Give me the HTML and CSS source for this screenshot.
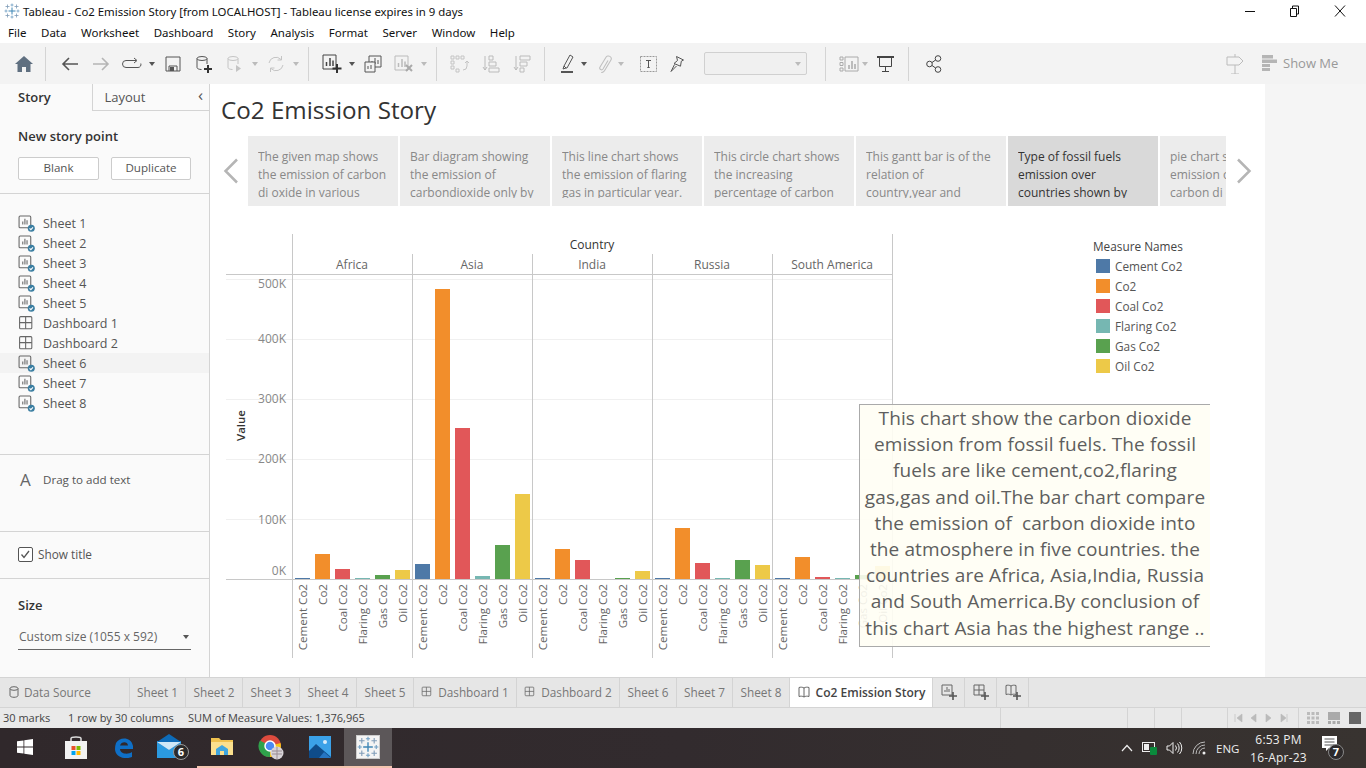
FILE: index.html
```html
<!DOCTYPE html>
<html lang="en">
<head>
  <meta charset="UTF-8">
  <title>Tableau - Co2 Emission Story</title>
  <link rel="stylesheet" href="styles.css">
</head>
<body>

<svg class="defs" width="0" height="0">
  <symbol id="i-sheet" viewBox="0 0 16 16">
    <rect x="1" y="1" width="11" height="11" rx="1" fill="none" stroke="#666"/>
    <path d="M4.500 9V6M6.500 9V3.500M8.500 9V5" stroke="#666" fill="none"/>
    <circle cx="12.500" cy="12.500" r="3.300" fill="#3b7ea1"/>
    <path d="M10.900 12.600l1.200 1.200 2-2.200" stroke="#fff" fill="none"/>
  </symbol>
  <symbol id="i-dash" viewBox="0 0 16 16">
    <rect x="1.500" y="1.500" width="11.500" height="11.500" rx="1" fill="none" stroke="#666"/>
    <path d="M7.200 1.500v11.500M1.500 7.200H13" stroke="#666" fill="none"/>
  </symbol>
  <symbol id="i-snow" viewBox="0 0 16 16">
    <path d="M8 4.500v7M4.500 8h7" stroke="#3f86b5" fill="none"/>
    <path d="M8 .5v3M6.500 2h3M8 12.500v3M6.500 14h3M.5 8h3M2 6.500v3M12.500 8h3M14 6.500v3" stroke="#6f9fc4" stroke-width=".8" fill="none"/>
    <path d="M3.500 1.500v4M1.500 3.500h4M12.500 1.500v4M10.500 3.500h4M3.500 10.500v4M1.500 12.500h4M12.500 10.500v4M10.500 12.500h4" stroke="#7f9cb8" stroke-width=".8" fill="none"/>
  </symbol>
  <symbol id="i-book" viewBox="0 0 14 14">
    <path d="M7 3C5.500 2 3.500 2 2 2.500v9c1.500-.5 3.500-.5 5 .5 1.500-1 3.500-1 5-.5v-9C10.500 2 8.500 2 7 3zM7 3v9" fill="none" stroke="#666"/>
  </symbol>
</svg>

<header class="titlebar">
  <svg class="title-logo" width="16" height="16"><use href="#i-snow"/></svg>
  <span class="title-text">Tableau - Co2 Emission Story [from LOCALHOST] - Tableau license expires in 9 days</span>
  <div class="win-btns">
    <svg width="12" height="12" viewBox="0 0 12 12"><path d="M1 6.500h10" stroke="#111"/></svg>
    <svg width="12" height="12" viewBox="0 0 12 12"><path d="M3.500 3V1h6v8H7.500M1.500 3.500h6v8h-6z" fill="none" stroke="#111"/></svg>
    <svg width="12" height="12" viewBox="0 0 12 12"><path d="M1 0.500l10 11M11 0.500l-10 11" stroke="#111"/></svg>
  </div>
</header>

<nav class="menubar">
  <span>File</span><span>Data</span><span>Worksheet</span><span>Dashboard</span><span>Story</span>
  <span>Analysis</span><span>Format</span><span>Server</span><span>Window</span><span>Help</span>
</nav>

<div class="toolbar">
  <div class="tb home">
    <svg width="18" height="16" viewBox="0 0 18 16"><path d="M9 0L0 8h2.500v8h4.500v-5h4v5h4.500V8H18z" fill="#5f6f80"/></svg>
  </div>
  <i class="sep"></i>
  <div class="tb tb-first">
    <svg width="18" height="14" viewBox="0 0 18 14"><path d="M17 7H2M8 1L2 7l6 6" fill="none" stroke="#555" stroke-width="1.600"/></svg>
  </div>
  <div class="tb">
    <svg width="18" height="14" viewBox="0 0 18 14"><path d="M1 7h15M10 1l6 6-6 6" fill="none" stroke="#b5b5b5" stroke-width="1.600"/></svg>
  </div>
  <div class="tb">
    <svg width="20" height="14" viewBox="0 0 20 14"><path d="M14 3.500H4a3 3 0 0 0 0 7h12a3 3 0 0 0 2.800-4M12 1l3 2.500-3 2.500" fill="none" stroke="#555"/></svg>
  </div>
  <i class="caret"></i>
  <div class="tb">
    <svg width="16" height="16" viewBox="0 0 16 16"><path d="M1 1h14v14H1zM4 15v-5h8v5" fill="none" stroke="#555"/><rect x="5" y="11" width="4" height="4" fill="#555"/></svg>
  </div>
  <div class="tb">
    <svg width="18" height="18" viewBox="0 0 18 18"><ellipse cx="7" cy="3.500" rx="5" ry="2" fill="none" stroke="#555"/><path d="M2 3.500v9c0 1.100 2 2 4.500 2M12 3.500V9" fill="none" stroke="#555"/><path d="M13 10v8M9 14h8" stroke="#333" stroke-width="2"/></svg>
  </div>
  <div class="tb">
    <svg width="18" height="18" viewBox="0 0 18 18"><ellipse cx="7" cy="3.500" rx="5" ry="2" fill="none" stroke="#c4c4c4"/><path d="M2 3.500v9c0 1.100 2 2 4.500 2M12 3.500V9" fill="none" stroke="#c4c4c4"/><path d="M10 10v7l5-3.500z" fill="#c4c4c4"/></svg>
  </div>
  <i class="caret off"></i>
  <div class="tb">
    <svg width="18" height="16" viewBox="0 0 18 16"><path d="M2 7a7 7 0 0 1 12-3.500M16 9a7 7 0 0 1-12 3.500M14.500 0v4h-4M3.500 16v-4h4" fill="none" stroke="#c4c4c4"/></svg>
  </div>
  <i class="caret off"></i>
  <i class="sep"></i>
  <div class="tb">
    <svg width="20" height="19" viewBox="0 0 20 19"><path d="M1 1h13v14H1z" fill="none" stroke="#444"/><path d="M4.500 12V8M8 12V4M11 12V6.500" stroke="#444" stroke-width="1.500"/><path d="M15 10v9M10.500 14.500h9" stroke="#333" stroke-width="2"/></svg>
  </div>
  <i class="caret"></i>
  <div class="tb">
    <svg width="18" height="18" viewBox="0 0 18 18"><path d="M5 1h12v11H5z" fill="#f3f3f3" stroke="#555"/><path d="M8 9V6M11 9V3M14 9V5" stroke="#555"/><path d="M1 7h10v10H1z" fill="#f3f3f3" stroke="#555"/><path d="M4 14v-3M7 14v-4" stroke="#555"/></svg>
  </div>
  <div class="tb">
    <svg width="20" height="18" viewBox="0 0 20 18"><path d="M1 1h13v14H1z" fill="none" stroke="#bbb"/><path d="M4.500 12V8M8 12V4M11 12V6.500" stroke="#bbb" stroke-width="1.500"/><path d="M12 10l6 6M18 10l-6 6" stroke="#aaa" stroke-width="2"/></svg>
  </div>
  <i class="caret off"></i>
  <i class="sep"></i>
  <div class="tb">
    <svg width="20" height="18" viewBox="0 0 20 18"><path d="M1 1h3v3H1zM6 1h3v3H6zM11 1h3v3h-3zM1 6h3v3H1zM1 11h3v3H1zM6 14h3v3H6z" fill="none" stroke="#c4c4c4"/><path d="M17 6v5a4 4 0 0 1-4 4M15 8l2-2 2 2" fill="none" stroke="#c4c4c4"/></svg>
  </div>
  <div class="tb">
    <svg width="18" height="18" viewBox="0 0 18 18"><path d="M3 1v14M1 12l2 3 2-3" fill="none" stroke="#bbb"/><path d="M7 1h4v4H7zM7 7h7v4H7zM7 13h10v4H7z" fill="none" stroke="#bbb"/></svg>
  </div>
  <div class="tb">
    <svg width="18" height="18" viewBox="0 0 18 18"><path d="M3 1v14M1 12l2 3 2-3" fill="none" stroke="#bbb"/><path d="M7 1h10v4H7zM7 7h7v4H7zM7 13h4v4H7z" fill="none" stroke="#bbb"/></svg>
  </div>
  <i class="sep"></i>
  <div class="tb">
    <svg width="14" height="20" viewBox="0 0 14 20"><path d="M5 14L3 12 9 1l3 2-6 11zM3 12l-1 3 3-1" fill="none" stroke="#555"/><rect x="0" y="17" width="12" height="2" fill="#555"/></svg>
  </div>
  <i class="caret tuck"></i>
  <div class="tb">
    <svg width="14" height="18" viewBox="0 0 14 18"><path d="M10 5.500L5 14a1.800 1.800 0 0 1-3.100-1.800L8 2.300a2.800 2.800 0 0 1 4.800 2.900L6.500 15.800a3.600 3.600 0 0 1-3.300 1.700" fill="none" stroke="#c0c0c0" stroke-width="1.100"/></svg>
  </div>
  <i class="caret tuck off"></i>
  <div class="tb tb-text">
    <svg width="17" height="16" viewBox="0 0 17 16"><rect x="0.500" y="0.500" width="16" height="15" fill="none" stroke="#999" stroke-dasharray="2 1"/><path d="M6 4.500h5M8.500 4.500v7M7.300 11.500h2.400" fill="none" stroke="#555"/></svg>
  </div>
  <div class="tb tb-pin">
    <svg width="14" height="16" viewBox="0 0 14 16"><path d="M6.500.5l7 3.500-2.200 1.200-.8 5L4 7.500l3.500-3zM4.500 8.500L1 15.500l5.500-5.500" fill="none" stroke="#555"/></svg>
  </div>
  <div class="combo"><i class="caret off"></i></div>
  <i class="sep"></i>
  <div class="tb">
    <svg width="20" height="16" viewBox="0 0 20 16"><path d="M1 1h3v3H1zM1 6.500h3v3H1zM1 12h3v3H1z" fill="none" stroke="#aaa"/><path d="M6 1h13v14H6z" fill="none" stroke="#aaa"/><path d="M10 13V9M13 13V5M16 13V8" stroke="#aaa" stroke-width="1.500"/></svg>
  </div>
  <i class="caret tuck off"></i>
  <div class="tb">
    <svg width="17" height="16" viewBox="0 0 17 16"><path d="M0 1h17" stroke="#444" stroke-width="2"/><path d="M2.500 1.500v9h12v-9M8.500 10.500v5M5 15.500h7" fill="none" stroke="#444"/></svg>
  </div>
  <i class="sep"></i>
  <div class="tb tb-share">
    <svg width="16" height="18" viewBox="0 0 16 18"><circle cx="3.500" cy="9" r="2.800" fill="none" stroke="#444"/><circle cx="12" cy="3.500" r="2.800" fill="none" stroke="#444"/><circle cx="12" cy="14.500" r="2.800" fill="none" stroke="#444"/><path d="M6 7.500l3.600-2.500M6 10.500l3.600 2.500" stroke="#444"/></svg>
  </div>
  <div class="tb tb-right">
    <svg width="18" height="20" viewBox="0 0 18 20"><path d="M9 0v3M9 11v9M5 20h8M1 3h12l4 4-4 4H1z" fill="none" stroke="#bbb"/></svg>
  </div>
  <div class="showme">
    <svg width="15" height="16" viewBox="0 0 15 16"><path d="M0 0h11v3.500H0zM0 4.500h15V8H0zM0 9h8v3H0zM0 13h8v3H0z" fill="#b5b5b5"/></svg>
    <span>Show Me</span>
  </div>
</div>

<div class="main">
  <aside class="sidebar">
    <div class="side-tabs">
      <div class="side-tab active">Story</div>
      <div class="side-tab">Layout <span class="collapse">&lsaquo;</span></div>
    </div>
    <section class="side-new">
      <h4>New story point</h4>
      <div class="side-btns">
        <button class="blank">Blank</button>
        <button class="dup">Duplicate</button>
      </div>
    </section>
    <ul class="sheet-list">
      <li><svg><use href="#i-sheet"/></svg>Sheet 1</li>
      <li><svg><use href="#i-sheet"/></svg>Sheet 2</li>
      <li><svg><use href="#i-sheet"/></svg>Sheet 3</li>
      <li><svg><use href="#i-sheet"/></svg>Sheet 4</li>
      <li><svg><use href="#i-sheet"/></svg>Sheet 5</li>
      <li><svg><use href="#i-dash"/></svg>Dashboard 1</li>
      <li><svg><use href="#i-dash"/></svg>Dashboard 2</li>
      <li class="hover"><svg><use href="#i-sheet"/></svg>Sheet 6</li>
      <li><svg><use href="#i-sheet"/></svg>Sheet 7</li>
      <li><svg><use href="#i-sheet"/></svg>Sheet 8</li>
    </ul>
    <section class="side-text"><span class="big-a">A</span>Drag to add text</section>
    <section class="side-title">
      <svg width="15" height="15" viewBox="0 0 15 15"><rect x="0.500" y="0.500" width="14" height="14" rx="1.500" fill="#fff" stroke="#555"/><path d="M3.500 7.500l2.500 3 5-6.500" fill="none" stroke="#555" stroke-width="1.300"/></svg>
      Show title
    </section>
    <section class="side-size">
      <h4>Size</h4>
      <div class="size-select">Custom size (1055 x 592)<i class="caret dark"></i></div>
    </section>
  </aside>

  <main class="canvas">
    <h1 class="story-title">Co2 Emission Story</h1>
    <div class="story-nav">
      <svg class="nav-arrow" width="16" height="26" viewBox="0 0 16 26"><path d="M14 1.500L2.500 13 14 24.500" fill="none" stroke="#b5b5b5" stroke-width="2.500"/></svg>
      <div class="points">
        <div class="point"><p>The given map shows<br>the emission of carbon<br>di oxide in various</p></div>
        <div class="point"><p>Bar diagram showing<br>the emission of<br>carbondioxide only by</p></div>
        <div class="point"><p>This line chart shows<br>the emission of flaring<br>gas in particular year.</p></div>
        <div class="point"><p>This circle chart shows<br>the increasing<br>percentage of carbon</p></div>
        <div class="point"><p>This gantt bar is of the<br>relation of<br>country,year and</p></div>
        <div class="point current"><p>Type of fossil fuels<br>emission over<br>countries shown by</p></div>
        <div class="point"><p>pie chart shows the<br>emission of<br>carbon di oxide</p></div>
      </div>
      <svg class="nav-arrow" width="16" height="26" viewBox="0 0 16 26"><path d="M2 1.500L13.500 13 2 24.500" fill="none" stroke="#b5b5b5" stroke-width="2.500"/></svg>
    </div>

    <div class="viz">
      <svg class="chart" width="683" height="430" viewBox="210 234 683 430">
        <g class="grid">
          <path d="M226 279.500H892M226 339.500H892M226 399.500H892M226 459.500H892M226 519.500H892"/>
        </g>
        <g class="rules">
          <path d="M292.500 234V658M892.500 234V658M412.500 254V658M532.500 254V658M652.500 254V658M772.500 254V658M226 274.500H892M226 579.500H892"/>
        </g>
        <text class="head" x="592" y="249">Country</text>
        <text class="pane" x="352" y="269">Africa</text>
        <text class="pane" x="472" y="269">Asia</text>
        <text class="pane" x="592" y="269">India</text>
        <text class="pane" x="712" y="269">Russia</text>
        <text class="pane" x="832" y="269">South America</text>

        <text class="tick" x="286" y="288">500K</text>
        <text class="tick" x="286" y="343">400K</text>
        <text class="tick" x="286" y="403">300K</text>
        <text class="tick" x="286" y="463">200K</text>
        <text class="tick" x="286" y="524">100K</text>
        <text class="tick" x="286" y="575">0K</text>
        <text class="axis-name" transform="translate(245 441) rotate(-90)">Value</text>

        <rect class="c-cement" x="295" y="578" width="15" height="1"/>
        <rect class="c-co2" x="315" y="554" width="15" height="25"/>
        <rect class="c-coal" x="335" y="569" width="15" height="10"/>
        <rect class="c-flaring" x="355" y="578" width="15" height="1"/>
        <rect class="c-gas" x="375" y="575" width="15" height="4"/>
        <rect class="c-oil" x="395" y="570" width="15" height="9"/>

        <rect class="c-cement" x="415" y="564" width="15" height="15"/>
        <rect class="c-co2" x="435" y="289" width="15" height="290"/>
        <rect class="c-coal" x="455" y="428" width="15" height="151"/>
        <rect class="c-flaring" x="475" y="576" width="15" height="3"/>
        <rect class="c-gas" x="495" y="545" width="15" height="34"/>
        <rect class="c-oil" x="515" y="494" width="15" height="85"/>

        <rect class="c-cement" x="535" y="578" width="15" height="1"/>
        <rect class="c-co2" x="555" y="549" width="15" height="30"/>
        <rect class="c-coal" x="575" y="560" width="15" height="19"/>
        <rect class="c-gas" x="615" y="578" width="15" height="1"/>
        <rect class="c-oil" x="635" y="571" width="15" height="8"/>

        <rect class="c-cement" x="655" y="578" width="15" height="1"/>
        <rect class="c-co2" x="675" y="528" width="15" height="51"/>
        <rect class="c-coal" x="695" y="563" width="15" height="16"/>
        <rect class="c-flaring" x="715" y="578" width="15" height="1"/>
        <rect class="c-gas" x="735" y="560" width="15" height="19"/>
        <rect class="c-oil" x="755" y="565" width="15" height="14"/>

        <rect class="c-cement" x="775" y="578" width="15" height="1"/>
        <rect class="c-co2" x="795" y="557" width="15" height="22"/>
        <rect class="c-coal" x="815" y="577" width="15" height="2"/>
        <rect class="c-flaring" x="835" y="578" width="15" height="1"/>
        <rect class="c-gas" x="855" y="575" width="15" height="4"/>
        <rect class="c-oil" x="875" y="566" width="15" height="13"/>

        <g class="bar-labels">
          <text transform="translate(307 584) rotate(-90)">Cement Co2</text>
          <text transform="translate(327 584) rotate(-90)">Co2</text>
          <text transform="translate(347 584) rotate(-90)">Coal Co2</text>
          <text transform="translate(367 584) rotate(-90)">Flaring Co2</text>
          <text transform="translate(387 584) rotate(-90)">Gas Co2</text>
          <text transform="translate(407 584) rotate(-90)">Oil Co2</text>
          <text transform="translate(427 584) rotate(-90)">Cement Co2</text>
          <text transform="translate(447 584) rotate(-90)">Co2</text>
          <text transform="translate(467 584) rotate(-90)">Coal Co2</text>
          <text transform="translate(487 584) rotate(-90)">Flaring Co2</text>
          <text transform="translate(507 584) rotate(-90)">Gas Co2</text>
          <text transform="translate(527 584) rotate(-90)">Oil Co2</text>
          <text transform="translate(547 584) rotate(-90)">Cement Co2</text>
          <text transform="translate(567 584) rotate(-90)">Co2</text>
          <text transform="translate(587 584) rotate(-90)">Coal Co2</text>
          <text transform="translate(607 584) rotate(-90)">Flaring Co2</text>
          <text transform="translate(627 584) rotate(-90)">Gas Co2</text>
          <text transform="translate(647 584) rotate(-90)">Oil Co2</text>
          <text transform="translate(667 584) rotate(-90)">Cement Co2</text>
          <text transform="translate(687 584) rotate(-90)">Co2</text>
          <text transform="translate(707 584) rotate(-90)">Coal Co2</text>
          <text transform="translate(727 584) rotate(-90)">Flaring Co2</text>
          <text transform="translate(747 584) rotate(-90)">Gas Co2</text>
          <text transform="translate(767 584) rotate(-90)">Oil Co2</text>
          <text transform="translate(787 584) rotate(-90)">Cement Co2</text>
          <text transform="translate(807 584) rotate(-90)">Co2</text>
          <text transform="translate(827 584) rotate(-90)">Coal Co2</text>
          <text transform="translate(847 584) rotate(-90)">Flaring Co2</text>
          <text transform="translate(867 584) rotate(-90)">Gas Co2</text>
          <text transform="translate(887 584) rotate(-90)">Oil Co2</text>
        </g>
      </svg>

      <div class="legend">
        <div class="legend-title">Measure Names</div>
        <div class="legend-row"><i class="swatch s-cement"></i>Cement Co2</div>
        <div class="legend-row"><i class="swatch s-co2"></i>Co2</div>
        <div class="legend-row"><i class="swatch s-coal"></i>Coal Co2</div>
        <div class="legend-row"><i class="swatch s-flaring"></i>Flaring Co2</div>
        <div class="legend-row"><i class="swatch s-gas"></i>Gas Co2</div>
        <div class="legend-row"><i class="swatch s-oil"></i>Oil Co2</div>
      </div>
    </div>

    <div class="annotation">
      This chart show the carbon dioxide<br>
      emission from fossil fuels. The fossil<br>
      fuels are like cement,co2,flaring<br>
      gas,gas and oil.The bar chart compare<br>
      the emission of&nbsp; carbon dioxide into<br>
      the atmosphere in five countries. the<br>
      countries are Africa, Asia,India, Russia<br>
      and South Amerrica.By conclusion of<br>
      this chart Asia has the highest range ..
    </div>
  </main>
  <div class="outside"></div>
</div>

<div class="tabs">
  <div class="tab t-source">
    <svg width="10" height="12" viewBox="0 0 10 12"><ellipse cx="5" cy="2.500" rx="4" ry="1.800" fill="none" stroke="#666"/><path d="M1 2.500v7c0 1 1.800 1.800 4 1.800s4-.8 4-1.800v-7" fill="none" stroke="#666"/></svg>
    Data Source
  </div>
  <div class="tab t-s1">Sheet 1</div>
  <div class="tab t-sheet">Sheet 2</div>
  <div class="tab t-sheet">Sheet 3</div>
  <div class="tab t-sheet">Sheet 4</div>
  <div class="tab t-sheet">Sheet 5</div>
  <div class="tab t-dash"><svg width="12" height="12"><use href="#i-dash"/></svg>Dashboard 1</div>
  <div class="tab t-dash"><svg width="12" height="12"><use href="#i-dash"/></svg>Dashboard 2</div>
  <div class="tab t-sheet">Sheet 6</div>
  <div class="tab t-s1">Sheet 7</div>
  <div class="tab t-sheet">Sheet 8</div>
  <div class="tab t-story"><svg width="14" height="14"><use href="#i-book"/></svg>Co2 Emission Story</div>
  <div class="tab t-add">
    <svg width="16" height="16" viewBox="0 0 16 16"><path d="M1 1h10v10H1z" fill="none" stroke="#666"/><path d="M4 8V6M6 8V3M8 8V5" stroke="#666"/><path d="M12 8v8M8 12h8" stroke="#555" stroke-width="1.600"/></svg>
  </div>
  <div class="tab t-add">
    <svg width="16" height="16" viewBox="0 0 16 16"><path d="M1 1h10v10H1zM6 1v10M1 6h10" fill="none" stroke="#666"/><path d="M12 8v8M8 12h8" stroke="#555" stroke-width="1.600"/></svg>
  </div>
  <div class="tab t-add">
    <svg width="16" height="16" viewBox="0 0 16 16"><path d="M6 2C4.500 1 2.500 1 1 1.500v9c1.500-.5 3.500-.5 5 .5 1.500-1 3.500-1 5-.5v-9C9.500 1 7.500 1 6 2zM6 2v9" fill="none" stroke="#666"/><path d="M12 8v8M8 12h8" stroke="#555" stroke-width="1.600"/></svg>
  </div>
</div>

<footer class="statusbar">
  <span class="st-marks">30 marks</span>
  <span class="st-rows">1 row by 30 columns</span>
  <span>SUM of Measure Values: 1,376,965</span>
  <div class="st-right">
    <i class="st-cell c1"></i><i class="st-cell c2"></i><i class="st-cell c3"></i><i class="st-cell c4"></i>
    <div class="st-pager">
      <svg width="64" height="10" viewBox="0 0 64 10"><path d="M1 1v8M8 1v8L3 5zM22 1v8l-5-4zM32 1v8l5-4zM47 1v8l5-4zM53 1v8" fill="#bbb" stroke="#bbb" stroke-width=".6"/></svg>
    </div>
    <div class="st-views">
      <svg width="12" height="12" viewBox="0 0 12 12"><path d="M0 0h3v3H0zM4.500 0h3v3h-3zM9 0h3v3H9zM0 4.500h3v3H0zM4.500 4.500h3v3h-3zM9 4.500h3v3H9zM0 9h3v3H0zM4.500 9h3v3h-3zM9 9h3v3H9z" fill="#bbb"/></svg>
      <svg width="12" height="12" viewBox="0 0 12 12"><path d="M0 0h12v8H0zM0 9h3v3H0zM4.500 9h3v3h-3zM9 9h3v3H9z" fill="#aaa"/></svg>
      <svg width="12" height="12" viewBox="0 0 12 12"><rect width="12" height="12" fill="#666"/></svg>
    </div>
  </div>
</footer>

<div class="taskbar">
  <div class="task t-start">
    <svg width="16" height="16" viewBox="0 0 16 16"><path d="M0 2.300l6.500-.9v6.200H0zM7.300 1.300L16 0v7.600H7.300zM0 8.400h6.500v6.200L0 13.700zM7.300 8.400H16V16l-8.700-1.300z" fill="#fff"/></svg>
  </div>
  <div class="task">
    <svg width="24" height="24" viewBox="0 0 24 24"><path d="M7 6V3.500C7 1.500 17 1.500 17 3.500V6" fill="none" stroke="#ddd" stroke-width="1.500"/><rect x="1" y="6" width="22" height="18" fill="#f2f2f2"/><rect x="7.500" y="11" width="4" height="4" fill="#e8502a"/><rect x="12.500" y="11" width="4" height="4" fill="#7fba00"/><rect x="7.500" y="16" width="4" height="4" fill="#00a4ef"/><rect x="12.500" y="16" width="4" height="4" fill="#ffb900"/></svg>
  </div>
  <div class="task t-edge">
    <svg width="22" height="22" viewBox="0 0 22 22"><path d="M3 7C6 1 18 0 20 10v3H7c0 5 8 6 12 3v5c-7 3-17 0-17-8 0-2 .3-4 1-6zm4 2.500h8C15 5 8 5 7 9.500z" fill="#0f6fc6"/></svg>
  </div>
  <div class="task">
    <svg width="34" height="26" viewBox="0 0 34 26"><rect x="1" y="7" width="24" height="17" fill="#2b9ae0"/><path d="M1 8L13 0l12 8-12 8z" fill="#0d6bb8"/><path d="M1 8h24l-12 8z" fill="#cfe8f7"/><circle cx="25" cy="18" r="7.500" fill="#2a2a2a" stroke="#999"/><text class="badge-num" x="25" y="22">6</text></svg>
  </div>
  <div class="task">
    <svg width="22" height="20" viewBox="0 0 22 20"><path d="M0 1h8l2 2h12v15H0z" fill="#f0c24f"/><path d="M0 5h22v13H0z" fill="#fbe08e"/><path d="M5 12l6-4 6 4v6H5z" fill="#3fa6df"/><rect x="9" y="14" width="4" height="4" fill="#fbe08e"/></svg>
  </div>
  <div class="task">
    <svg width="26" height="26" viewBox="0 0 26 26"><circle cx="12" cy="12" r="11" fill="#dd4b3e"/><path d="M12 12L22.500 9A11 11 0 0 1 12 23z" fill="#f5c518"/><path d="M12 12L12 23A11 11 0 0 1 2 6.500z" fill="#2fa24b"/><circle cx="12" cy="12" r="5" fill="#4a8af4" stroke="#fff" stroke-width="1.500"/><circle cx="19" cy="19" r="6.500" fill="#d8d4d8"/><path d="M14 17h10M14 20h10M19 13v12" stroke="#9a8d94"/></svg>
  </div>
  <div class="task">
    <svg width="22" height="22" viewBox="0 0 22 22"><rect width="22" height="22" fill="#3ba1e8"/><path d="M0 22V15L7 8l15 13v1z" fill="#0f4c8a"/><path d="M10 22l5-6 7 6z" fill="#2675c2"/><circle cx="16" cy="6" r="2" fill="#d8ecfb"/></svg>
  </div>
  <div class="task t-tableau">
    <svg class="tableau-tile" width="22" height="22" viewBox="0 0 16 16"><rect width="16" height="16" fill="#f4f4f4"/><use href="#i-snow"/></svg>
  </div>
  <div class="tray">
    <svg width="12" height="8" viewBox="0 0 12 8"><path d="M1 7l5-5.500L11 7" fill="none" stroke="#eee" stroke-width="1.200"/></svg>
    <svg width="15" height="14" viewBox="0 0 15 14"><rect x="0.500" y="1.500" width="12" height="9" fill="none" stroke="#eee"/><rect x="2" y="3" width="5" height="6" fill="#eee"/><rect x="8" y="6" width="7" height="8" rx="1" fill="#0a8a3c"/></svg>
    <svg width="17" height="14" viewBox="0 0 17 14"><path d="M1 5h2.500L7 1.500v11L3.500 9H1zM9.500 4.500a4 4 0 0 1 0 5M11.500 2.500a7 7 0 0 1 0 9M13.500 1a9 9 0 0 1 0 12" fill="none" stroke="#eee"/></svg>
    <svg width="15" height="14" viewBox="0 0 15 14"><path d="M1 13A12 12 0 0 1 13 1M4 13a9 9 0 0 1 9-9M7 13a6 6 0 0 1 6-6" fill="none" stroke="#bbb"/><circle cx="12" cy="12" r="1.500" fill="#eee"/></svg>
    <span class="lang">ENG</span>
    <div class="clock">6:53 PM<br>16-Apr-23</div>
    <div class="notify">
      <svg width="24" height="26" viewBox="0 0 24 26"><path d="M1 1h15v12H8l-3 3v-3H1z" fill="#fff"/><path d="M3.500 4h10M3.500 7h10M3.500 10h10" stroke="#555"/><circle cx="15" cy="17" r="7.500" fill="#2d2a2b" stroke="#888"/><text class="badge-num" x="15" y="21">7</text></svg>
    </div>
  </div>
</div>

</body>
</html>
```

FILE: styles.css
```css
* {
  box-sizing: border-box;
}
html, body {
  margin: 0;
  height: 768px;
  overflow: hidden;
}
body {
  font-family: "Open Sans", "Noto Sans", sans-serif;
  font-size: 12px;
  color: #555;
  background: #fff;
  display: flex;
  flex-direction: column;
}
.defs {
  position: absolute;
}
svg {
  display: block;
  flex: none;
}
h1, h4, p, ul {
  margin: 0;
  padding: 0;
}

/* window chrome */
.titlebar {
  height: 22px;
  display: flex;
  align-items: center;
  padding-left: 4px;
  color: #111;
  font-family: "Noto Sans", sans-serif;
}
.title-text {
  margin-left: 3px;
  font-size: 11.4px;
}
.win-btns {
  margin-left: auto;
  display: flex;
  gap: 33px;
  padding-right: 20px;
}
.menubar {
  height: 21px;
  display: flex;
  align-items: center;
  gap: 14.6px;
  padding-left: 8px;
  color: #111;
  font-family: "Noto Sans", sans-serif;
  font-size: 11.5px;
}

/* toolbar */
.toolbar {
  height: 41px;
  background: #f3f3f3;
  display: flex;
  align-items: center;
}
.tb {
  width: 31px;
  height: 24px;
  display: flex;
  align-items: center;
  justify-content: center;
}
.home {
  width: 29px;
  margin-left: 9px;
}
.tb-first {
  margin-left: 1px;
}
.tb-text {
  margin-left: 7px;
}
.tb-pin {
  margin-left: -3px;
}
.tb-share {
  margin-left: 2px;
}
.tb-right {
  margin-left: auto;
  margin-right: 12px;
}
.sep {
  width: 1px;
  height: 34px;
  margin: 0 7px;
  background: #d4d4d4;
}
.caret {
  width: 10px;
  display: flex;
  justify-content: center;
}
.caret::after {
  content: "";
  border: 3px solid transparent;
  border-top: 4px solid #555;
  border-bottom: 0;
}
.caret.off::after {
  border-top-color: #bbb;
}
.caret.dark::after {
  border-top-color: #555;
}
.caret.tuck {
  margin-left: -4px;
}
.combo {
  width: 103px;
  height: 23px;
  margin: 0 11px 0 12px;
  border: 1px solid #d0d0d0;
  border-radius: 2px;
  background: #f0f0f0;
  display: flex;
  align-items: center;
  justify-content: flex-end;
  padding-right: 3px;
}
.showme {
  display: flex;
  align-items: center;
  gap: 6px;
  width: 104px;
  color: #999;
  font-size: 13px;
  padding-bottom: 1px;
}

/* main area */
.main {
  height: 593px;
  display: flex;
  border-top: 0;
}
.sidebar {
  width: 210px;
  border-right: 1px solid #d4d4d4;
  background: #fafafa;
  color: #555;
  display: flex;
  flex-direction: column;
}
.side-tabs {
  display: flex;
  height: 27px;
}
.side-tab {
  flex: 1;
  position: relative;
  text-align: center;
  line-height: 26px;
  font-size: 13px;
  border-left: 1px solid #d4d4d4;
  border-bottom: 1px solid #d4d4d4;
  padding-right: 52px;
}
.side-tab.active {
  flex: none;
  width: 92px;
  border: 0;
  padding: 0 0 0 18px;
  text-align: left;
  font-weight: 600;
  color: #333;
}
.collapse {
  position: absolute;
  right: 6px;
  top: -2px;
  font-size: 17px;
}
.side-new {
  height: 83px;
  padding: 16px 18px 0;
  border-bottom: 1px solid #d4d4d4;
}
h4 {
  font-size: 13px;
  font-weight: 600;
  color: #333;
  line-height: 18px;
}
.side-btns {
  display: flex;
  gap: 12px;
  margin-top: 12px;
}
.side-btns button {
  height: 23px;
  padding: 0 0 2px;
  background: #fff;
  border: 1px solid #ccc;
  border-radius: 2px;
  color: #555;
  font: inherit;
  font-size: 11.6px;
}
.blank {
  width: 81px;
}
.dup {
  width: 80px;
}
.sheet-list {
  list-style: none;
  height: 261px;
  padding-top: 19px;
  border-bottom: 1px solid #d4d4d4;
}
.sheet-list li {
  height: 20px;
  display: flex;
  align-items: center;
  gap: 8px;
  padding-left: 18px;
  font-size: 12.5px;
}
.sheet-list svg {
  width: 17px;
  height: 17px;
}
.sheet-list .hover {
  background: #f3f3f3;
}
.side-text {
  height: 77px;
  padding: 14px 0 0 20px;
  display: flex;
  align-items: flex-start;
  border-bottom: 1px solid #d4d4d4;
  line-height: 22px;
  font-size: 11.6px;
}
.big-a {
  width: 23px;
  font-size: 17px;
  color: #666;
}
.side-title {
  height: 47px;
  display: flex;
  align-items: center;
  gap: 5px;
  padding: 0 0 2px 18px;
  border-bottom: 1px solid #d4d4d4;
  font-size: 11.8px;
}
.side-size {
  padding: 17px 18px 0;
}
.size-select {
  height: 26px;
  margin-top: 10px;
  border-bottom: 1px solid #666;
  display: flex;
  align-items: center;
  justify-content: space-between;
  padding-left: 1px;
  color: #666;
}

/* story canvas */
.canvas {
  width: 1055px;
  position: relative;
  background: #fff;
  overflow: hidden;
}
.story-title {
  height: 52px;
  line-height: 52px;
  padding-left: 11px;
  font-size: 24.2px;
  font-weight: 400;
  color: #333;
}
.story-nav {
  display: flex;
  align-items: center;
  padding-left: 13px;
  height: 70px;
}
.points {
  display: flex;
  gap: 2px;
  width: 978px;
  height: 70px;
  margin: 0 10px 0 9px;
  overflow: hidden;
}
.point {
  flex: none;
  width: 150px;
  background: #ececec;
  padding: 12px 0 0 10px;
  color: #888;
}
.point p {
  height: 50px;
  line-height: 18px;
  overflow: hidden;
  white-space: nowrap;
}
.point.current {
  background: #d9d9d9;
  color: #333;
}
.viz {
  display: flex;
  margin-top: 28px;
}
.legend {
  margin-left: 200px;
  padding-top: 3px;
  font-size: 11.8px;
}
.legend-title {
  line-height: 19px;
  color: #444;
}
.legend-row {
  height: 20px;
  display: flex;
  align-items: center;
  gap: 5px;
  padding-left: 3px;
}
.swatch {
  width: 14px;
  height: 14px;
}
.s-cement { background: #4e79a7; }
.s-co2 { background: #f28e2b; }
.s-coal { background: #e15759; }
.s-flaring { background: #76b7b2; }
.s-gas { background: #59a14f; }
.s-oil { background: #edc948; }

/* chart */
.chart text {
  font-family: "Open Sans", "Noto Sans", sans-serif;
  font-size: 12px;
  fill: #666;
}
.grid path {
  stroke: #f0f0f0;
  fill: none;
}
.rules path {
  stroke: #c8c8c8;
  fill: none;
}
.chart .head {
  text-anchor: middle;
  fill: #333;
}
.chart .pane {
  text-anchor: middle;
}
.chart .tick {
  text-anchor: end;
  fill: #888;
}
.chart .axis-name {
  fill: #333;
  font-weight: 600;
  font-size: 11.5px;
}
.chart .bar-labels text {
  text-anchor: end;
  font-size: 11.6px;
}
.c-cement { fill: #4e79a7; }
.c-co2 { fill: #f28e2b; }
.c-coal { fill: #e15759; }
.c-flaring { fill: #76b7b2; }
.c-gas { fill: #59a14f; }
.c-oil { fill: #edc948; }

.annotation {
  position: absolute;
  left: 649px;
  top: 320px;
  width: 351px;
  height: 243px;
  background: rgba(255, 254, 244, .9);
  border: 1px solid #aaa;
  border-right: 0;
  color: #5e5e5e;
  font-size: 19px;
  letter-spacing: .1px;
  line-height: 26.2px;
  text-align: center;
  white-space: nowrap;
}
.outside {
  flex: 1;
  background: #f5f5f5;
}

/* sheet tabs */
.tabs {
  height: 31px;
  display: flex;
  background: #e6e6e6;
  border-top: 1px solid #d4d4d4;
  border-bottom: 1px solid #d4d4d4;
  color: #777;
  font-size: 11.8px;
}
.tab {
  display: flex;
  align-items: center;
  justify-content: center;
  gap: 5px;
  padding-bottom: 1px;
  border-right: 1px solid #d4d4d4;
}
.t-source { width: 130px; justify-content: flex-start; padding-left: 9px; }
.t-s1 { width: 56px; }
.t-sheet { width: 57px; }
.t-dash { width: 103px; }
.t-story {
  width: 143px;
  background: #fff;
  color: #444;
  font-weight: 600;
  font-size: 12px;
}
.t-add { width: 32px; }

/* status bar */
.statusbar {
  height: 20px;
  display: flex;
  align-items: center;
  background: #e9e9e9;
  color: #444;
  font-size: 11px;
  padding: 0 0 0 3px;
  position: relative;
  line-height: 18px;
}
.st-marks { width: 65px; }
.st-rows { width: 120px; }
.st-right {
  margin-left: auto;
  display: flex;
  align-items: center;
  height: 100%;
}
.st-cell {
  height: 100%;
  border-left: 1px solid #d4d4d4;
}
.c1 { width: 127px; }
.c2 { width: 27px; }
.c3 { width: 27px; }
.c4 { width: 46px; }
.st-pager {
  width: 71px;
  height: 100%;
  border-left: 1px solid #d4d4d4;
  display: flex;
  align-items: center;
  padding-left: 6px;
}
.st-views {
  width: 68px;
  height: 100%;
  border-left: 1px solid #d4d4d4;
  display: flex;
  align-items: center;
  gap: 9px;
  padding-left: 8px;
}

/* windows taskbar */
.taskbar {
  height: 40px;
  display: flex;
  align-items: center;
  background: linear-gradient(90deg, #30282b, #322b2e 50%, #383330);
  color: #eee;
}
.task {
  width: 49px;
  height: 40px;
  display: flex;
  align-items: center;
  justify-content: center;
  border-bottom: 2px solid transparent;
}
.t-start {
  margin-right: 2px;
}
.t-edge {
  width: 48px;
}
.task:nth-child(5), .task:nth-child(6), .task:nth-child(7) {
  border-bottom-color: #f4c5b0;
}
.t-tableau {
  width: 48px;
  background: #5c5759;
  border-bottom-color: #f4c5b0;
}
.tableau-tile {
  box-shadow: 0 0 0 1px #ccc;
}
.tray {
  margin-left: auto;
  display: flex;
  align-items: center;
  font-size: 12px;
  padding-right: 21px;
}
.tray svg + svg {
  margin-left: 9px;
}
.lang {
  margin-left: 9px;
  width: 25px;
  font-size: 11.5px;
}
.clock {
  width: 75px;
  text-align: center;
  line-height: 18px;
  letter-spacing: .2px;
  padding-top: 2px;
}
.notify {
  margin-left: 5px;
}
.badge-num {
  font-family: "Open Sans", sans-serif;
  font-size: 11px;
  font-weight: 700;
  fill: #fff;
  text-anchor: middle;
}
```
